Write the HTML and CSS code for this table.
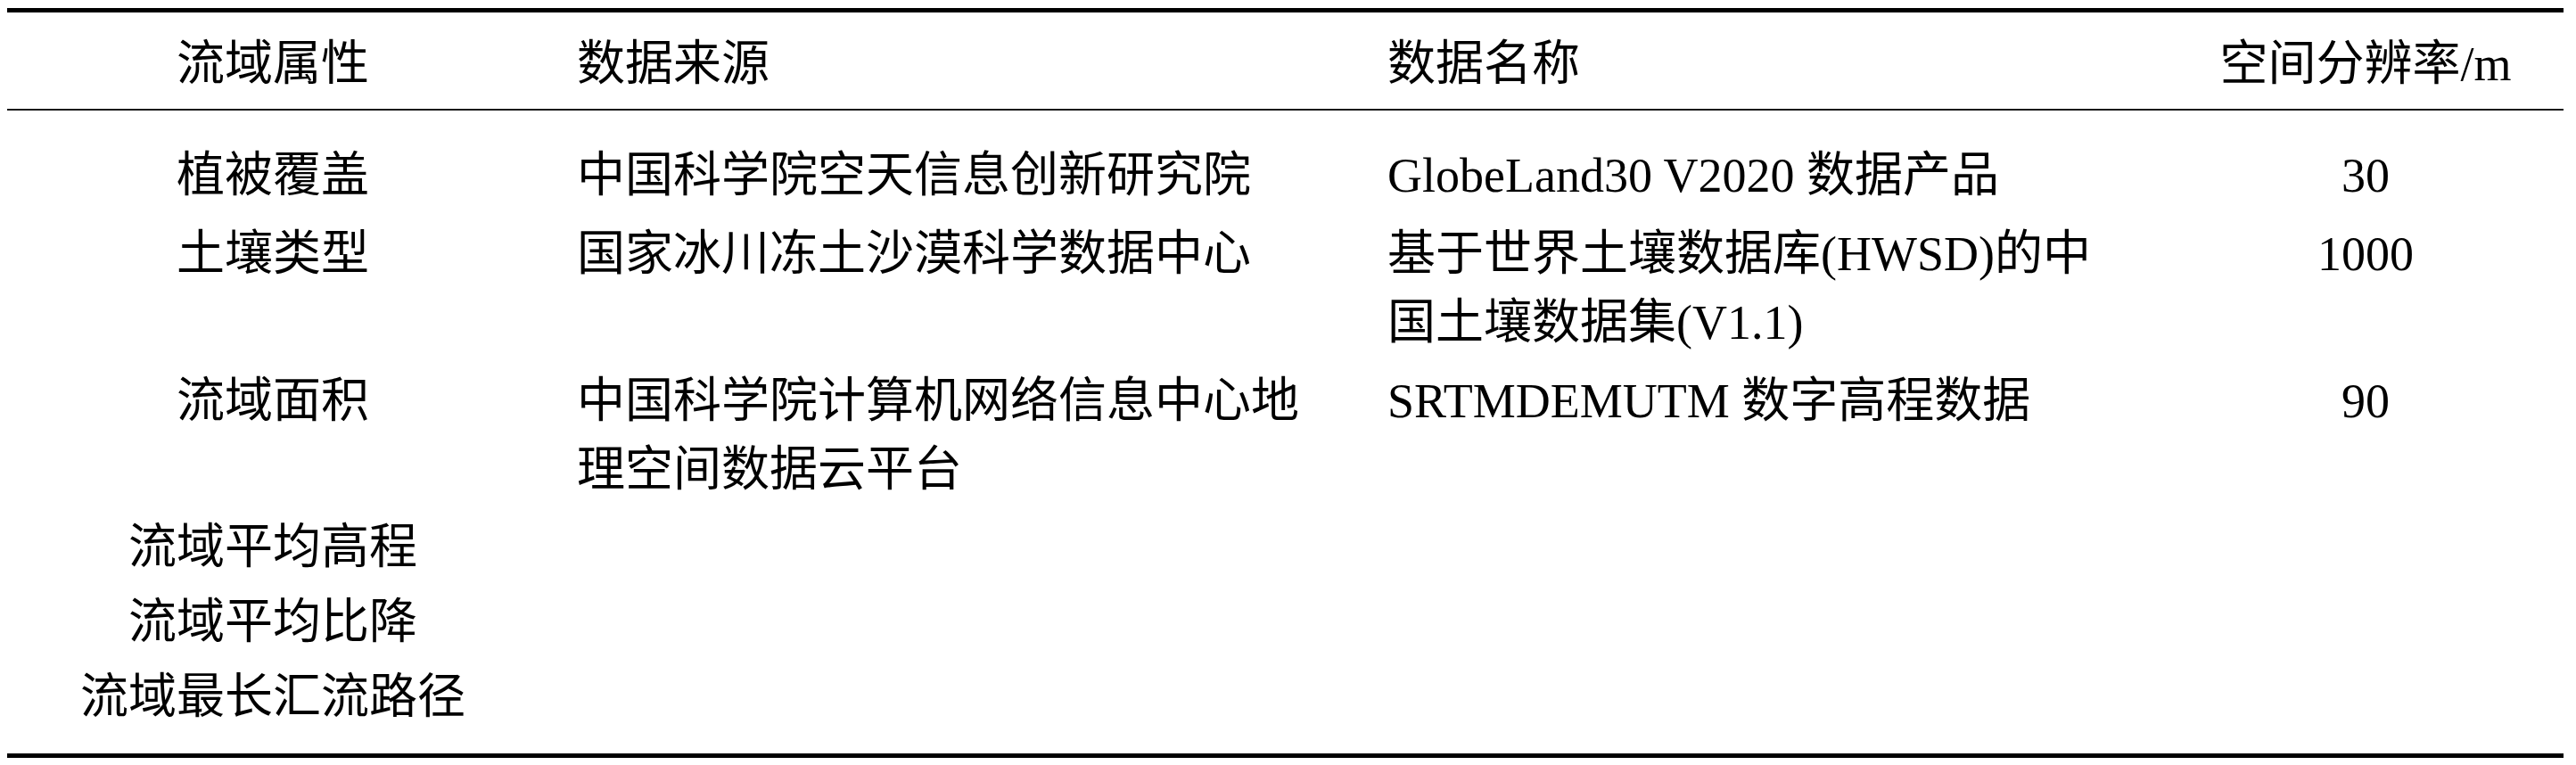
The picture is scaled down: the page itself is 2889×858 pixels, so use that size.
FILE: index.html
```html
<!DOCTYPE html>
<html lang="zh-CN">
<head>
<meta charset="utf-8">
<title>数据来源表</title>
<link rel="stylesheet" href="styles.css">
</head>
<body>
<div class="table">
  <div class="row head">
    <div class="cell c1">流域属性</div>
    <div class="cell c2">数据来源</div>
    <div class="cell c3">数据名称</div>
    <div class="cell c4">空间分辨率/m</div>
  </div>
  <div class="body">
    <div class="row">
      <div class="cell c1">植被覆盖</div>
      <div class="cell c2">中国科学院空天信息创新研究院</div>
      <div class="cell c3">GlobeLand30 V2020 数据产品</div>
      <div class="cell c4">30</div>
    </div>
    <div class="row">
      <div class="cell c1">土壤类型</div>
      <div class="cell c2">国家冰川冻土沙漠科学数据中心</div>
      <div class="cell c3">基于世界土壤数据库(HWSD)的中国土壤数据集(V1.1)</div>
      <div class="cell c4">1000</div>
    </div>
    <div class="row">
      <div class="cell c1">流域面积</div>
      <div class="cell c2">中国科学院计算机网络信息中心地理空间数据云平台</div>
      <div class="cell c3">SRTMDEMUTM 数字高程数据</div>
      <div class="cell c4">90</div>
    </div>
    <div class="row tight">
      <div class="cell c1">流域平均高程</div>
      <div class="cell c2"></div>
      <div class="cell c3"></div>
      <div class="cell c4"></div>
    </div>
    <div class="row tight">
      <div class="cell c1">流域平均比降</div>
      <div class="cell c2"></div>
      <div class="cell c3"></div>
      <div class="cell c4"></div>
    </div>
    <div class="row tight">
      <div class="cell c1">流域最长汇流路径</div>
      <div class="cell c2"></div>
      <div class="cell c3"></div>
      <div class="cell c4"></div>
    </div>
  </div>
</div>
</body>
</html>
```

FILE: styles.css
```css
html, body {
  margin: 0;
  padding: 0;
  background: #ffffff;
}

body {
  padding: 9px 0 0 8px;
}

.table {
  width: 2867px;
  border-top: 5px solid #000;
  border-bottom: 5px solid #000;
  font-family: "Liberation Serif", "Noto Sans CJK SC", serif;
  font-size: 54px;
  line-height: 77px;
  color: #000;
}

.row {
  display: grid;
  grid-template-columns: 596px 916px 856px 499px;
  padding: 5px 0 6px;
}

.row.head {
  padding: 20px 0 11px;
  border-bottom: 2px solid #1a1a1a;
}

.row.tight {
  padding: 4px 0 3px;
}

.body {
  padding: 30px 0 21px;
}

.cell {
  min-width: 0;
}

.c1 {
  text-align: center;
}

.c2 {
  padding: 0 33px 0 43px;
}

.c3 {
  padding: 0 0 0 36px;
}

.c4 {
  text-align: center;
  padding-left: 55px;
}
```
